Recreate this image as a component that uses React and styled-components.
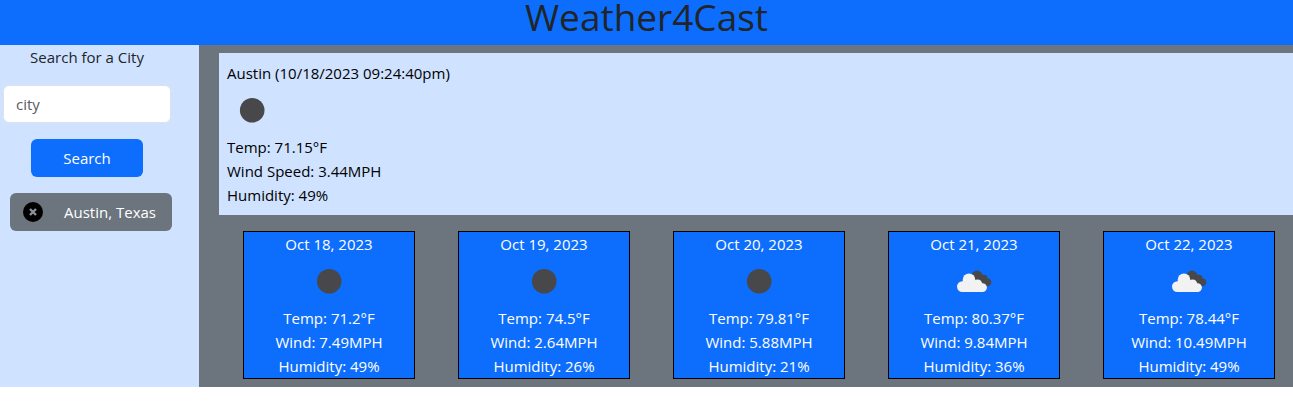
import React from "react";
import styled, { createGlobalStyle } from "styled-components";

const GlobalStyle = createGlobalStyle`
  *, *::before, *::after { box-sizing: border-box; }
  body {
    margin: 0;
    background: #fff;
    color: #212529;
    font-family: "Segoe UI", "Open Sans", "Noto Sans", sans-serif;
    font-size: 15px;
    line-height: 24px;
  }
  button, input { font: inherit; }
`;

const Header = styled.header`
  background: #0d6efd;
  padding-bottom: 11px;
  text-align: center;
`;

const Title = styled.h1`
  margin: 0;
  font-size: 37px;
  font-weight: 400;
  line-height: 34px;
`;

const Layout = styled.div`
  display: flex;
  align-items: stretch;
`;

const Sidebar = styled.aside`
  flex: 0 0 199px;
  display: flex;
  flex-direction: column;
  gap: 16px;
  padding: 0 25px 0 0;
  background: #cfe2ff;
`;

const SearchForm = styled.form`
  display: flex;
  flex-direction: column;
  align-items: center;
  gap: 16px;
`;

const CityInput = styled.input`
  width: 168px;
  height: 38px;
  padding: 6px 12px;
  border: 1px solid #dee2e6;
  border-radius: 6px;
  background: #fff;
  color: #212529;

  &::placeholder {
    color: #595c5f;
    opacity: 1;
  }
`;

const SearchButton = styled.button`
  width: 112px;
  height: 38px;
  border: 0;
  border-radius: 6px;
  background: #0d6efd;
  color: #fff;
`;

const History = styled.ul`
  margin: 0;
  padding: 0 0 0 10px;
  list-style: none;
`;

const HistoryButton = styled.button`
  display: flex;
  align-items: center;
  gap: 20px;
  width: 162px;
  height: 38px;
  padding: 0 12px;
  border: 0;
  border-radius: 6px;
  background: #6c757d;
  color: #fff;
  white-space: nowrap;
`;

const Main = styled.main`
  flex: 1;
  min-width: 0;
  padding: 8px 0 8px 20px;
  background: #6c757d;
`;

const CurrentWeather = styled.section`
  padding: 8px;
  background: #cfe2ff;
  color: #000;
`;

const Line = styled.p`
  margin: 0;
`;

const Forecast = styled.section`
  display: grid;
  grid-template-columns: repeat(5, 1fr);
  gap: 43px;
  padding: 16px 18px 0 24px;
`;

const DayCard = styled.article`
  border: 1px solid #000;
  background: #0d6efd;
  color: #fff;
  text-align: center;
  white-space: nowrap;
`;

const WeatherSvg = styled.svg`
  display: block;
  width: 50px;
  height: 50px;
  margin: ${(p) => (p.$centered ? "0 auto" : "0")};
`;

function WeatherIcon({ kind, centered }) {
  if (kind === "clouds") {
    return (
      <WeatherSvg $centered={centered} viewBox="0 0 50 50" role="img" aria-label="Broken clouds">
        <g fill="#48484a">
          <circle cx="28" cy="20" r="5.4" />
          <circle cx="34.8" cy="22.6" r="3.8" />
          <circle cx="38.5" cy="26.3" r="3.8" />
          <path d="M28 16L35 19.4L40 24L38.5 30.1H32L24 24Z" />
        </g>
        <g fill="#f2f2f2">
          <circle cx="13.4" cy="30.6" r="5.4" />
          <circle cx="20" cy="23.8" r="6.3" />
          <circle cx="28.6" cy="28" r="4.6" />
          <circle cx="33.5" cy="31.6" r="4.4" />
          <path d="M13.8 24.4L20 21L25 25L34 28L33.5 36H13.4Z" />
        </g>
      </WeatherSvg>
    );
  }
  return (
    <WeatherSvg $centered={centered} viewBox="0 0 50 50" role="img" aria-label="Clear night">
      <circle cx="25.2" cy="25.2" r="12.3" fill="#48484a" />
    </WeatherSvg>
  );
}

function RemoveIcon() {
  return (
    <svg width="22" height="22" viewBox="0 0 22 22" aria-hidden="true">
      <circle cx="11" cy="11" r="10" fill="#000" />
      <path d="M8 8L14 14M14 8L8 14" stroke="#8b9299" strokeWidth="2.4" fill="none" />
    </svg>
  );
}

const days = [
  { date: "Oct 18, 2023", kind: "clear", temp: "71.2", wind: "7.49", humidity: 49 },
  { date: "Oct 19, 2023", kind: "clear", temp: "74.5", wind: "2.64", humidity: 26 },
  { date: "Oct 20, 2023", kind: "clear", temp: "79.81", wind: "5.88", humidity: 21 },
  { date: "Oct 21, 2023", kind: "clouds", temp: "80.37", wind: "9.84", humidity: 36 },
  { date: "Oct 22, 2023", kind: "clouds", temp: "78.44", wind: "10.49", humidity: 49 },
];

export default function App() {
  return (
    <>
      <GlobalStyle />
      <Header>
        <Title>Weather4Cast</Title>
      </Header>
      <Layout>
        <Sidebar>
          <SearchForm onSubmit={(e) => e.preventDefault()}>
            <label htmlFor="city">Search for a City</label>
            <CityInput id="city" type="text" placeholder="city" />
            <SearchButton type="submit">Search</SearchButton>
          </SearchForm>
          <History>
            <li>
              <HistoryButton type="button">
                <RemoveIcon />
                Austin, Texas
              </HistoryButton>
            </li>
          </History>
        </Sidebar>
        <Main>
          <CurrentWeather>
            <Line>Austin (10/18/2023 09:24:40pm)</Line>
            <WeatherIcon kind="clear" />
            <Line>Temp: 71.15°F</Line>
            <Line>Wind Speed: 3.44MPH</Line>
            <Line>Humidity: 49%</Line>
          </CurrentWeather>
          <Forecast>
            {days.map((day) => (
              <DayCard key={day.date}>
                <Line>{day.date}</Line>
                <WeatherIcon kind={day.kind} centered />
                <Line>Temp: {day.temp}°F</Line>
                <Line>Wind: {day.wind}MPH</Line>
                <Line>Humidity: {day.humidity}%</Line>
              </DayCard>
            ))}
          </Forecast>
        </Main>
      </Layout>
    </>
  );
}
